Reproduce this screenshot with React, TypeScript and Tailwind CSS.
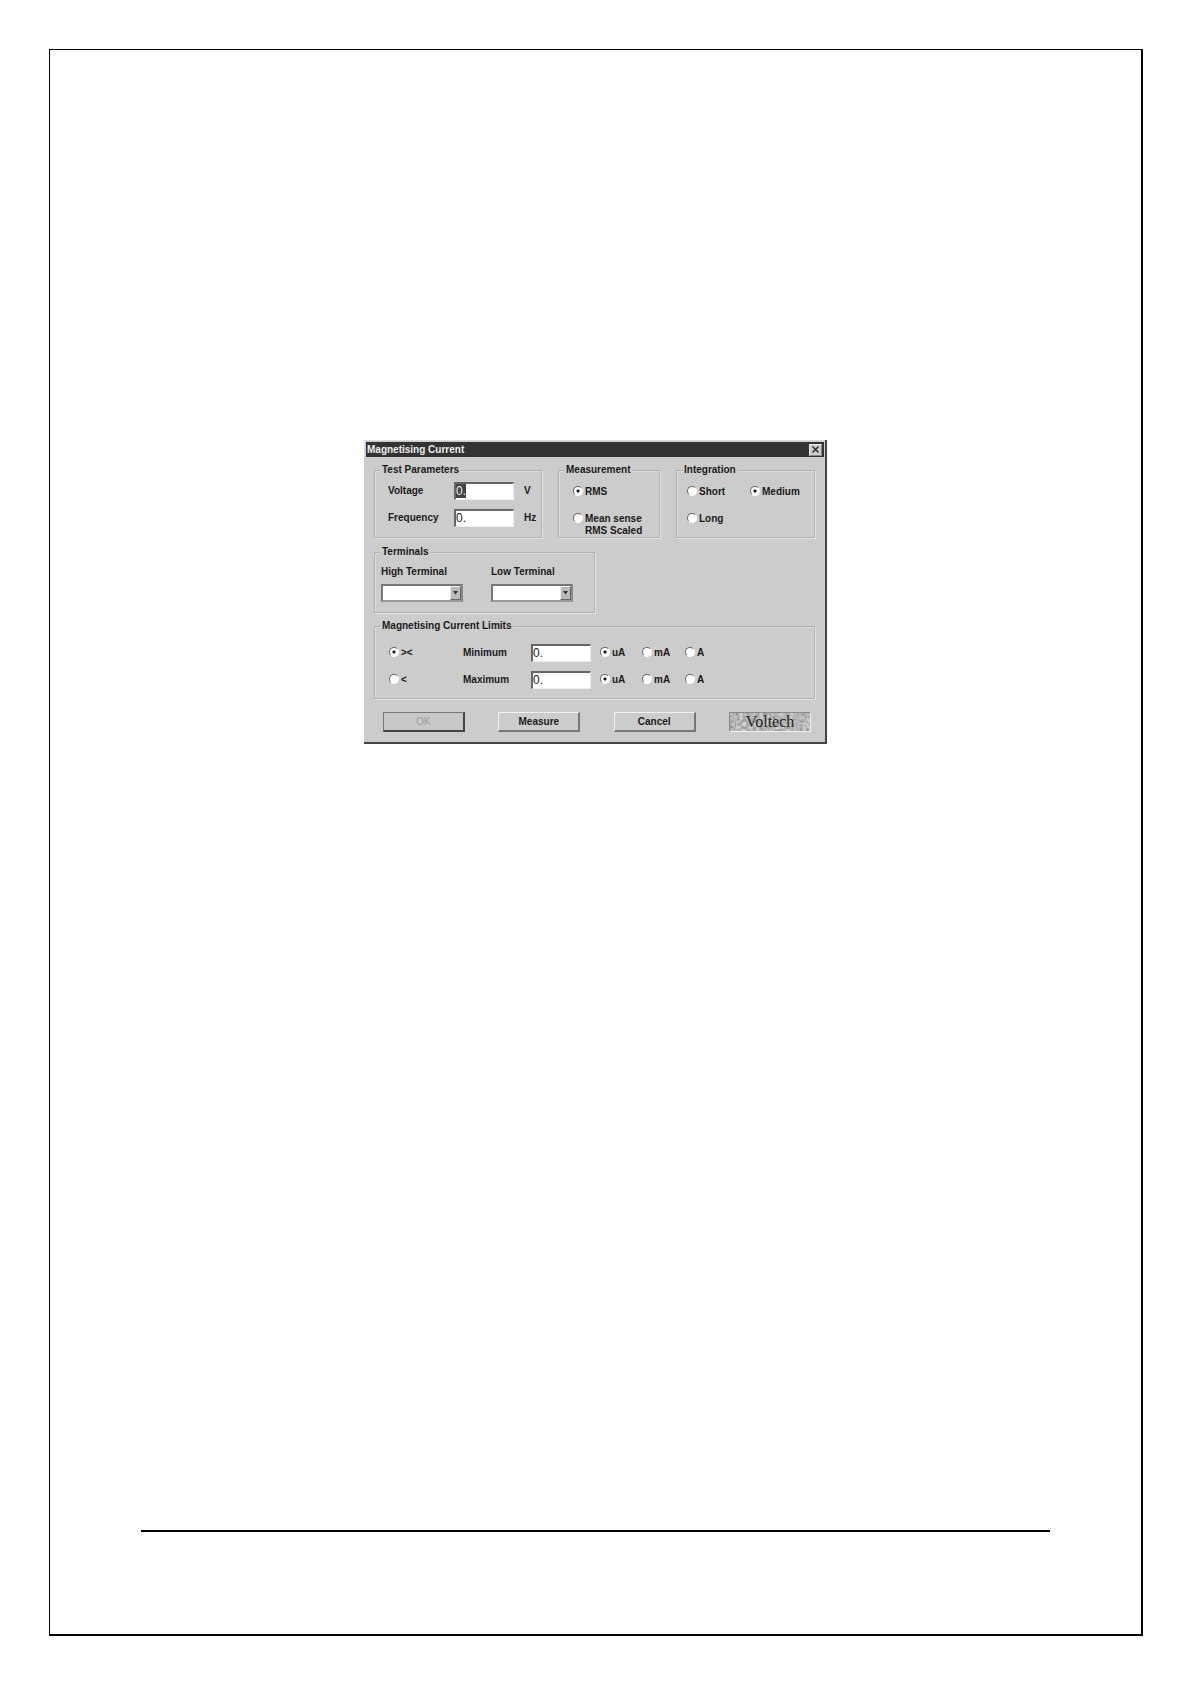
import { useEffect, useRef } from 'react';
import type { ReactNode, Ref } from 'react';

const UNITS = ['uA', 'mA', 'A'];

type GroupProps = {
  title: string;
  className?: string;
  children: ReactNode;
};

const Group = ({ title, className = '', children }: GroupProps) => (
  <fieldset
    className={`min-w-0 border border-[#b0b0b0] px-[5px] shadow-[1px_1px_0_#e4e4e4,inset_1px_1px_0_#dcdcdc] ${className}`}
  >
    <legend className="bg-[#ccc] px-[2px]">{title}</legend>
    {children}
  </fieldset>
);

type RadioProps = {
  name: string;
  label: ReactNode;
  checked?: boolean;
};

const Radio = ({ name, label, checked }: RadioProps) => (
  <label className="flex items-start gap-[2px]">
    <input
      type="radio"
      name={name}
      defaultChecked={checked}
      className="size-[10px] shrink-0 appearance-none rounded-full border border-white border-t-[#666] border-l-[#666] bg-white checked:bg-[radial-gradient(circle,#111_1px,#fff_2px)]"
    />
    <span className="whitespace-nowrap">{label}</span>
  </label>
);

type FieldProps = {
  id: string;
  inputRef?: Ref<HTMLInputElement>;
};

const Field = ({ id, inputRef }: FieldProps) => (
  <input
    id={id}
    ref={inputRef}
    type="text"
    defaultValue="0."
    className="h-[18px] w-full min-w-0 border border-[#eee] border-t-2 border-l-2 border-t-[#666] border-l-[#666] bg-white pb-[2px] text-xs leading-[13px] font-normal text-[#222] outline-none selection:bg-[#444] selection:text-[#eee]"
  />
);

type TerminalProps = {
  id: string;
  label: string;
};

const Terminal = ({ id, label }: TerminalProps) => (
  <div className="flex flex-col gap-[6px]">
    <label htmlFor={id} className="whitespace-nowrap">{label}</label>
    <div className="relative">
      <select
        id={id}
        className="block h-[18px] w-full appearance-none border-2 border-[#eee] border-t-[#777] border-l-[#777] border-r-[#888] border-b-[#999] bg-white"
      >
        <option value=""></option>
      </select>
      <span className="pointer-events-none absolute top-[2px] right-[2px] flex h-[14px] w-[11px] items-center justify-center border border-[#eee] border-r-[#666] border-b-[#666] bg-[#bbb]">
        <svg viewBox="0 0 5 4" className="h-1 w-[5px]">
          <path d="M0 0h5L2.5 3.5z" fill="#333" />
        </svg>
      </span>
    </div>
  </div>
);

type LimitRowProps = {
  id: string;
  mode: string;
  label: string;
  checked?: boolean;
};

const LimitRow = ({ id, mode, label, checked }: LimitRowProps) => (
  <div className="grid grid-cols-[74px_68px_60px_1fr] items-center">
    <Radio name="limit-mode" label={mode} checked={checked} />
    <label htmlFor={id}>{label}</label>
    <Field id={id} />
    <div className="grid grid-cols-[42px_43px_auto] pl-[9px]">
      {UNITS.map((unit) => (
        <Radio key={unit} name={`${id}-unit`} label={unit} checked={unit === 'uA'} />
      ))}
    </div>
  </div>
);

const PushButton = ({ children }: { children: ReactNode }) => (
  <button
    type="button"
    className="h-5 w-[82px] border border-[#f2f2f2] border-r-2 border-b-2 border-r-[#777] border-b-[#777] bg-[#ccc] font-bold"
  >
    {children}
  </button>
);

const Logo = () => (
  <div className="relative flex h-5 w-[82px] items-center justify-center border border-[#f0f0f0] border-t-[#888] border-l-[#888] bg-[#b8b8b8]">
    <svg className="absolute inset-0 size-full" aria-hidden="true">
      <filter id="marble" colorInterpolationFilters="sRGB">
        <feTurbulence type="fractalNoise" baseFrequency="0.3" numOctaves="3" seed="4" />
        <feColorMatrix values="0.45 0 0 0 0.49  0.45 0 0 0 0.49  0.45 0 0 0 0.49  0 0 0 0 1" />
      </filter>
      <rect width="100%" height="100%" filter="url(#marble)" />
    </svg>
    <span className="relative font-['Liberation_Serif',serif] text-base leading-[18px] font-normal text-[#222]">
      Voltech
    </span>
  </div>
);

const MagnetisingCurrentDialog = () => {
  const voltageRef = useRef<HTMLInputElement>(null);

  useEffect(() => {
    voltageRef.current?.focus();
    voltageRef.current?.select();
  }, []);

  return (
    <form
      role="dialog"
      aria-labelledby="dialog-title"
      className="mx-auto w-full max-w-[463px] border-r-2 border-b-2 border-[#444] bg-[#ccc] font-['Liberation_Sans',Arial,sans-serif] text-[10px] leading-3 font-bold text-[#1a1a1a]"
    >
      <div className="border-t border-l border-[#ddd] pt-px pr-px pl-px">
        <header className="flex h-[15px] items-center justify-between bg-[#333] pr-[2px] pl-px text-[#eee]">
          <h1 id="dialog-title">Magnetising Current</h1>
          <button
            type="button"
            aria-label="Close"
            className="flex h-3 w-[13px] items-center justify-center border border-[#eee] border-r-[#888] border-b-[#888] bg-[#ccc]"
          >
            <svg viewBox="0 0 7 7" className="size-[7px]">
              <path d="M0.5 0.5l6 6M6.5 0.5l-6 6" stroke="#222" strokeWidth="1.3" />
            </svg>
          </button>
        </header>
      </div>

      <div className="flex flex-col px-[10px] pt-[7px] pb-[10px]">
        <div className="grid grid-cols-[168fr_102fr_139fr] gap-4">
          <Group title="Test Parameters" className="pb-[9px]">
            <div className="grid grid-cols-[66px_60px_auto] items-center gap-y-[9px] pt-[6px] pl-2">
              <label htmlFor="voltage">Voltage</label>
              <Field id="voltage" inputRef={voltageRef} />
              <span className="pl-[10px]">V</span>
              <label htmlFor="frequency">Frequency</label>
              <Field id="frequency" />
              <span className="pl-[10px]">Hz</span>
            </div>
          </Group>

          <Group title="Measurement">
            <div className="flex flex-col gap-[15px] pt-[10px] pl-[9px]">
              <Radio name="measurement" label="RMS" checked />
              <Radio name="measurement" label={<>Mean sense<br />RMS Scaled</>} />
            </div>
          </Group>

          <Group title="Integration">
            <div className="grid grid-cols-[63px_auto] gap-y-[15px] pt-[10px] pl-[5px]">
              <Radio name="integration" label="Short" />
              <Radio name="integration" label="Medium" checked />
              <Radio name="integration" label="Long" />
            </div>
          </Group>
        </div>

        <Group title="Terminals" className="mt-2 w-1/2 pb-[10px]">
          <div className="grid grid-cols-[82px_82px] gap-7 pt-2 pl-px">
            <Terminal id="high-terminal" label="High Terminal" />
            <Terminal id="low-terminal" label="Low Terminal" />
          </div>
        </Group>

        <Group title="Magnetising Current Limits" className="mt-[7px] pb-[9px]">
          <div className="flex flex-col gap-[9px] pt-3 pl-[9px]">
            <LimitRow id="minimum" mode="><" label="Minimum" checked />
            <LimitRow id="maximum" mode="<" label="Maximum" />
          </div>
        </Group>

        <div className="mt-[13px] flex justify-between pr-[4px] pl-[9px]">
          <button
            type="button"
            disabled
            className="h-5 w-[82px] border border-[#777] border-r-2 border-b-2 border-r-[#444] border-b-[#444] bg-[#c8c8c8] font-normal text-[#999]"
          >
            OK
          </button>
          <PushButton>Measure</PushButton>
          <PushButton>Cancel</PushButton>
          <Logo />
        </div>
      </div>
    </form>
  );
};

export default function App() {
  return (
    <div className="flex min-h-screen bg-white pt-[49px] pr-12 pb-12 pl-[49px]">
      <main className="flex flex-1 flex-col border border-r-2 border-b-2 border-black pt-[390px] pb-[102px]">
        <MagnetisingCurrentDialog />
        <hr className="mx-[91px] mt-auto border-t-2 border-black" />
      </main>
    </div>
  );
}
